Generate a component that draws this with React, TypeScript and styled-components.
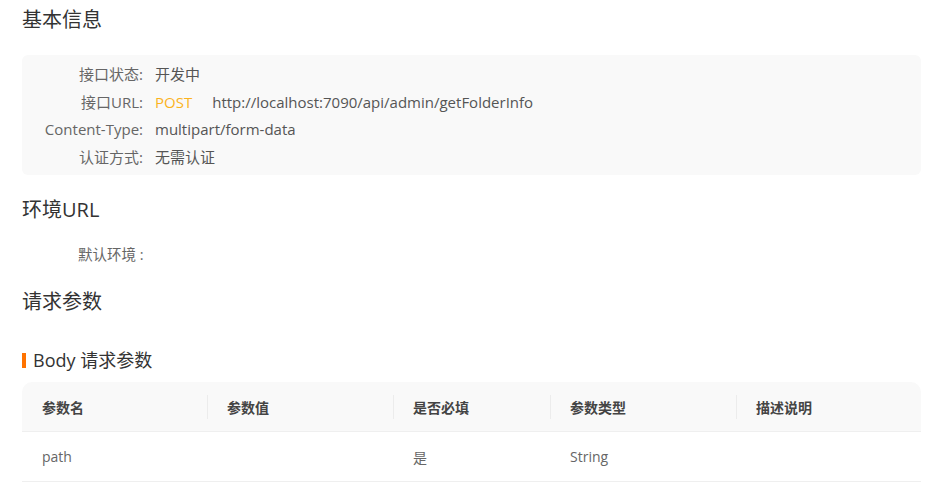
import styled, { createGlobalStyle } from "styled-components";

const GlobalStyle = createGlobalStyle`
  body {
    margin: 0;
    background: #fff;
    font-family: "Open Sans", "Noto Sans CJK SC", sans-serif;
  }
`;

const Page = styled.div`
  width: 899px;
  padding: 0 0 20px 22px;
  color: #333;
`;

const Title = styled.h2<{ $top: number }>`
  margin: ${(p) => p.$top}px 0 0;
  font-size: 20px;
  font-weight: 400;
  line-height: 28px;
  color: #333;
`;

const InfoPanel = styled.div`
  margin-top: 21px;
  padding: 6px 0 4px;
  background: #f9f9f9;
  border-radius: 6px;
  display: grid;
  grid-template-columns: 121px 1fr;
  column-gap: 12px;
  font-size: 15px;
  line-height: 27.5px;
`;

const Label = styled.div`
  text-align: right;
  color: #666;
`;

const Value = styled.div`
  color: #555;
  display: flex;
  gap: 20px;
`;

const Method = styled.span`
  color: #fbb31d;
`;

const EnvRow = styled.div`
  margin-top: 21px;
  padding-left: 56px;
  font-size: 14.5px;
  line-height: 20px;
  color: #666;
`;

const SubTitle = styled.h3`
  margin: 32px 0 0;
  display: flex;
  align-items: center;
  gap: 7px;
  font-size: 18px;
  font-weight: 400;
  line-height: 24px;
  color: #333;
  &::before {
    content: "";
    width: 4px;
    height: 15px;
    background: #ff7300;
  }
`;

const Table = styled.div`
  margin-top: 10px;
  font-size: 14px;
`;

const Row = styled.div<{ $head?: boolean }>`
  display: grid;
  grid-template-columns: 185px 186px 157px 186px 185px;
  height: 49px;
  align-items: center;
  border-bottom: 1px solid #efefef;
  background: ${(p) => (p.$head ? "#f9f9f9" : "#fff")};
  border-radius: ${(p) => (p.$head ? "10px 10px 0 0" : "0")};
  font-weight: ${(p) => (p.$head ? 700 : 400)};
  color: ${(p) => (p.$head ? "#444" : "#666")};
`;

const Cell = styled.div<{ $sep?: boolean }>`
  position: relative;
  padding: 0 20px;
  height: 100%;
  display: flex;
  align-items: center;
  &::before {
    content: "";
    display: ${(p) => (p.$sep ? "block" : "none")};
    position: absolute;
    left: 0;
    top: 13px;
    bottom: 12px;
    width: 1px;
    background: #ececec;
  }
`;

const info = [
  { label: "接口状态:", value: "开发中" },
  { label: "接口URL:", value: "url" },
  { label: "Content-Type:", value: "multipart/form-data" },
  { label: "认证方式:", value: "无需认证" },
];

const columns = ["参数名", "参数值", "是否必填", "参数类型", "描述说明"];
const rows = [["path", "", "是", "String", ""]];

export default function App() {
  return (
    <Page>
      <GlobalStyle />
      <Title $top={6}>基本信息</Title>
      <InfoPanel>
        {info.map((item) => (
          <>
            <Label key={item.label}>{item.label}</Label>
            <Value>
              {item.value === "url" ? (
                <>
                  <Method>POST</Method>
                  <span>http://localhost:7090/api/admin/getFolderInfo</span>
                </>
              ) : (
                item.value
              )}
            </Value>
          </>
        ))}
      </InfoPanel>
      <Title $top={21}>环境URL</Title>
      <EnvRow>默认环境 :</EnvRow>
      <Title $top={23}>请求参数</Title>
      <SubTitle>Body 请求参数</SubTitle>
      <Table>
        <Row $head>
          {columns.map((c, i) => (
            <Cell key={c} $sep={i > 0}>{c}</Cell>
          ))}
        </Row>
        {rows.map((r, ri) => (
          <Row key={ri}>
            {r.map((c, i) => (
              <Cell key={i}>{c}</Cell>
            ))}
          </Row>
        ))}
      </Table>
    </Page>
  );
}
